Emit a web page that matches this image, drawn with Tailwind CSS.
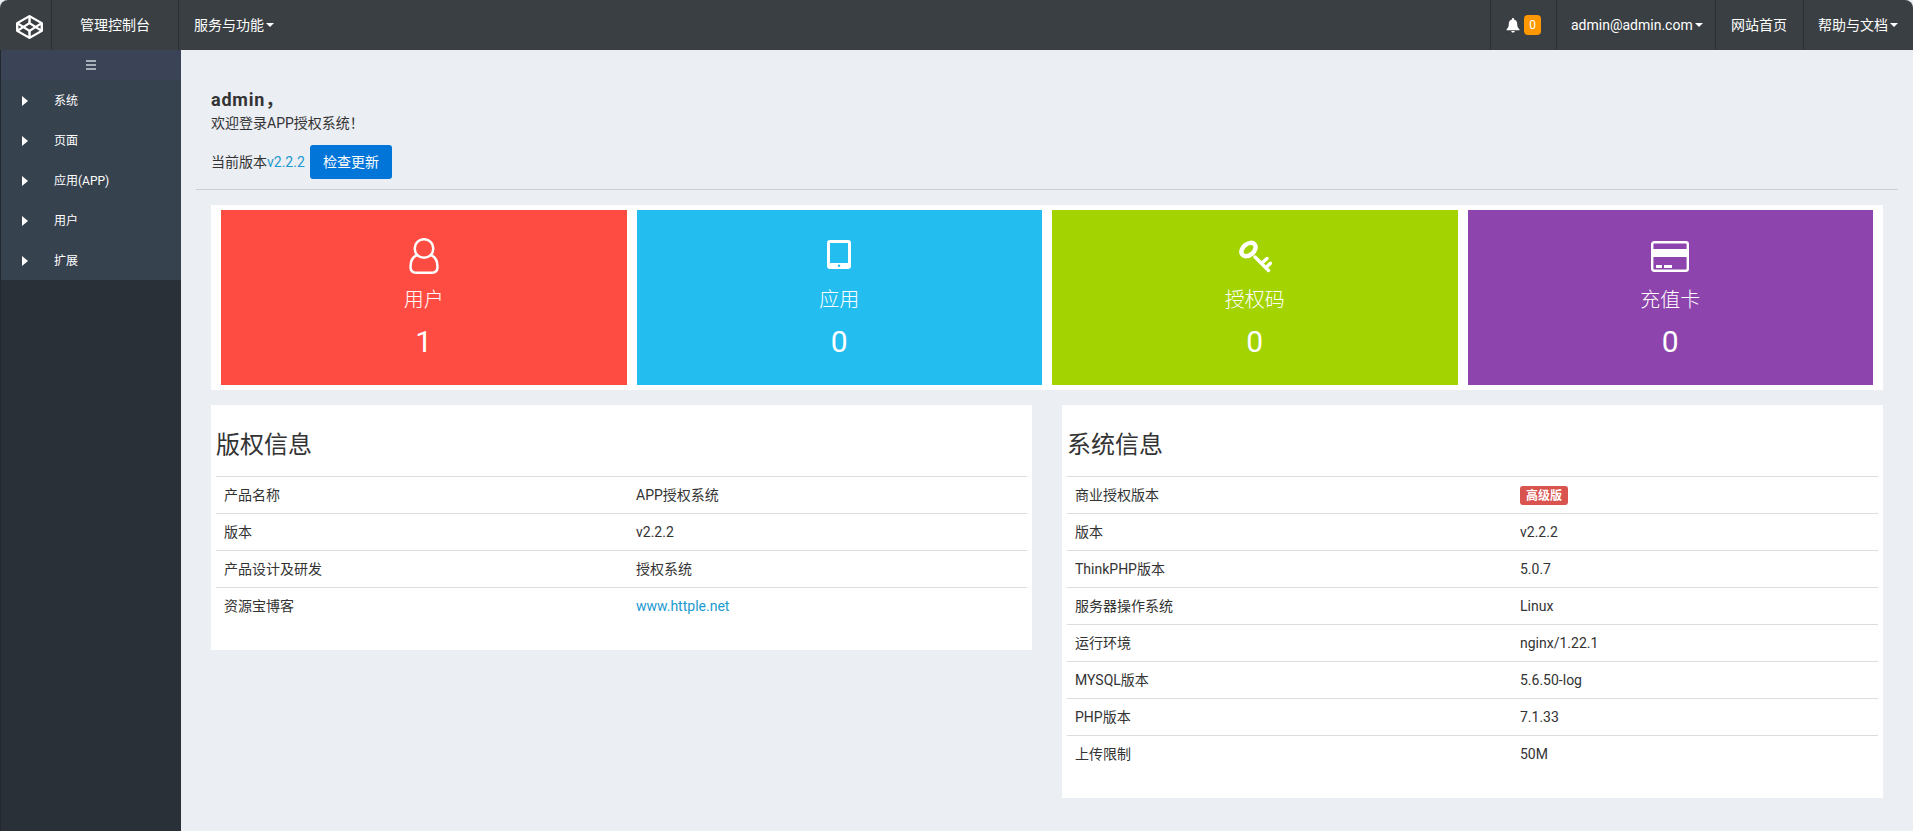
<!DOCTYPE html>
<html lang="zh-CN">
<head>
<meta charset="utf-8">
<title>管理控制台</title>
<script src="https://cdn.jsdelivr.net/npm/@tailwindcss/browser@4"></script>
</head>
<body class="bg-[#ebeef3] font-['Roboto','Noto_Sans_CJK_SC',sans-serif] text-sm text-[#333]">
<div class="flex h-screen flex-col overflow-hidden">

  <!-- top bar -->
  <header class="flex h-[50px] shrink-0 items-stretch rounded-t-lg bg-[#3a3f44] text-sm text-white">
    <div class="flex w-[52px] items-center justify-center border-r border-[#2b2f33] pt-[4px] pl-[8px]">
      <svg width="27" height="24" viewBox="1 1 22 22" preserveAspectRatio="none" fill="none" stroke="white" stroke-width="2" stroke-linejoin="round">
        <polygon points="12 2 22 8.5 22 15.5 12 22 2 15.5 2 8.5"/>
        <line x1="12" y1="22" x2="12" y2="15.5"/>
        <polyline points="22 8.5 12 15.5 2 8.5"/>
        <polyline points="2 15.5 12 8.5 22 15.5"/>
        <line x1="12" y1="2" x2="12" y2="8.5"/>
      </svg>
    </div>
    <div class="flex w-[127px] items-center justify-center border-r border-[#2b2f33]">管理控制台</div>
    <div class="flex items-center pl-[15px]">服务与功能<span class="ml-[2px] border-x-4 border-t-4 border-x-transparent border-t-white"></span></div>

    <div class="ml-auto flex items-stretch">
      <div class="flex w-[66px] items-center border-l border-[#2b2f33] pl-[15px]">
        <svg width="14" height="15" viewBox="0 0 14 15" fill="white"><path d="M7 0C7.6 0 8 .4 8 1v.6c2 .5 3.2 2.2 3.2 4.2 0 3 .8 4.2 2.3 5.7v.7H.5v-.7C2 10 2.8 8.8 2.8 5.8c0-2 1.2-3.7 3.2-4.2V1c0-.6.4-1 1-1zM5.3 13h3.4c0 1-.8 1.5-1.7 1.5S5.3 14 5.3 13z"/></svg>
        <span class="ml-[4px] flex h-[20px] w-[17px] items-center justify-center rounded-[4px] bg-[#ff9800] text-xs">0</span>
      </div>
      <div class="flex w-[159px] items-center border-l border-[#2b2f33] pl-[14px]">admin@admin.com<span class="ml-[2px] border-x-4 border-t-4 border-x-transparent border-t-white"></span></div>
      <div class="flex w-[88px] items-center border-l border-[#2b2f33] pl-[15px]">网站首页</div>
      <div class="flex w-[110px] items-center border-l border-[#2b2f33] pl-[14px]">帮助与文档<span class="ml-[2px] border-x-4 border-t-4 border-x-transparent border-t-white"></span></div>
    </div>
  </header>

  <div class="flex min-h-0 flex-1">
    <!-- sidebar -->
    <aside class="w-[181px] shrink-0 border-l border-[#23282e] bg-[#2a3038] text-xs text-white">
      <div class="flex h-[30px] flex-col items-center justify-center gap-[2px] bg-[#3a4456]">
        <span class="h-[2px] w-[10px] bg-[#a9afb8]"></span>
        <span class="h-[2px] w-[10px] bg-[#a9afb8]"></span>
        <span class="h-[2px] w-[10px] bg-[#a9afb8]"></span>
      </div>
      <nav class="bg-[#37424f]">
        <a class="flex h-10 items-center pt-[2px]"><span class="ml-[21px] border-y-[5px] border-l-[6px] border-y-transparent border-l-white"></span><span class="ml-[26px]">系统</span></a>
        <a class="flex h-10 items-center pt-[2px]"><span class="ml-[21px] border-y-[5px] border-l-[6px] border-y-transparent border-l-white"></span><span class="ml-[26px]">页面</span></a>
        <a class="flex h-10 items-center pt-[2px]"><span class="ml-[21px] border-y-[5px] border-l-[6px] border-y-transparent border-l-white"></span><span class="ml-[26px]">应用(APP)</span></a>
        <a class="flex h-10 items-center pt-[2px]"><span class="ml-[21px] border-y-[5px] border-l-[6px] border-y-transparent border-l-white"></span><span class="ml-[26px]">用户</span></a>
        <a class="flex h-10 items-center pt-[2px]"><span class="ml-[21px] border-y-[5px] border-l-[6px] border-y-transparent border-l-white"></span><span class="ml-[26px]">扩展</span></a>
      </nav>
    </aside>

    <!-- content -->
    <main class="min-w-0 flex-1 px-[15px]">
      <div class="px-[15px] pt-[38px]">
        <h4 class="h-[24px] text-lg leading-[24px] font-bold tracking-[0.8px]">admin，</h4>
        <p class="mt-px leading-5">欢迎登录APP授权系统！</p>
        <div class="mt-[12px] flex items-center">
          当前版本<a class="w-[43px] text-[#1b9ad0]">v2.2.2</a>
          <button class="h-[34px] w-[82px] rounded-[3px] bg-[#0275d8] text-white">检查更新</button>
        </div>
      </div>
      <hr class="mt-[10px] border-[#ccd0d4]">

      <!-- stat cards -->
      <div class="mx-[15px] mt-[15px] grid grid-cols-4 gap-[10px] bg-white px-[10px] py-[5px] text-white">
        <div class="flex h-[175px] flex-col items-center bg-[#ff4c42] pt-[28px]">
          <svg class="h-9" width="30" height="36" viewBox="0 0 30 36" fill="none" stroke="white" stroke-width="2.5"><circle cx="15" cy="10.5" r="9.3"/><path d="M8 17C3 19 1.5 24 1.5 29c0 4 1.5 5.7 5.5 5.7h16c4 0 5.5-1.7 5.5-5.7 0-5-1.5-10-6.5-12"/></svg>
          <div class="mt-[12px] text-xl leading-7 font-light">用户</div>
          <div class="mt-[10px] text-3xl leading-9">1</div>
        </div>
        <div class="flex h-[175px] flex-col items-center bg-[#23bdf0] pt-[28px]">
          <svg class="h-9" width="24" height="36" viewBox="0 0 24 36" fill="white" fill-rule="evenodd"><path d="M3 2h18a3 3 0 0 1 3 3v23a3 3 0 0 1-3 3H3a3 3 0 0 1-3-3V5a3 3 0 0 1 3-3zM3 5v20h18V5zM12 26.5a1.3 1.3 0 1 0 0 2.6 1.3 1.3 0 0 0 0-2.6z"/></svg>
          <div class="mt-[12px] text-xl leading-7 font-light">应用</div>
          <div class="mt-[10px] text-3xl leading-9">0</div>
        </div>
        <div class="flex h-[175px] flex-col items-center bg-[#a3d300] pt-[28px]">
          <svg class="h-9" width="34" height="36" viewBox="12 14 34 36" fill="none" stroke="white" stroke-linecap="round"><ellipse cx="22.5" cy="25.5" rx="8" ry="5.5" transform="rotate(-40 22.5 25.5)" stroke-width="4.5"/><path d="M29 33l13.5 13.5M36 39l5-4.5M40.5 43l4-3.8" stroke-width="3.4"/></svg>
          <div class="mt-[12px] text-xl leading-7 font-light">授权码</div>
          <div class="mt-[10px] text-3xl leading-9">0</div>
        </div>
        <div class="flex h-[175px] flex-col items-center bg-[#8e44ad] pt-[28px]">
          <svg class="h-9" width="38" height="36" viewBox="0 0 38 36" fill="white"><rect x="1.2" y="4.2" width="35.6" height="28.6" rx="2" fill="none" stroke="white" stroke-width="2.4"/><rect x="1" y="11" width="36" height="8"/><rect x="5" y="27" width="6" height="3"/><rect x="13" y="27" width="8" height="3"/></svg>
          <div class="mt-[12px] text-xl leading-7 font-light">充值卡</div>
          <div class="mt-[10px] text-3xl leading-9">0</div>
        </div>
      </div>

      <!-- info tables -->
      <div class="mx-[15px] mt-[15px] grid grid-cols-2 items-start gap-[30px]">
        <section class="bg-white px-[5px] pb-[25px]">
          <h3 class="flex h-[71px] items-end pb-[15px] text-2xl leading-8 font-normal">版权信息</h3>
          <table class="w-full table-fixed">
            <tbody>
              <tr class="h-[37px] border-t border-[#ddd]"><td class="w-[412px] px-2">产品名称</td><td class="px-2">APP授权系统</td></tr>
              <tr class="h-[37px] border-t border-[#ddd]"><td class="px-2">版本</td><td class="px-2">v2.2.2</td></tr>
              <tr class="h-[37px] border-t border-[#ddd]"><td class="px-2">产品设计及研发</td><td class="px-2">授权系统</td></tr>
              <tr class="h-[37px] border-t border-[#ddd]"><td class="px-2">资源宝博客</td><td class="px-2"><a class="text-[#1b9ad0]">www.httple.net</a></td></tr>
            </tbody>
          </table>
        </section>
        <section class="bg-white px-[5px] pb-[25px]">
          <h3 class="flex h-[71px] items-end pb-[15px] text-2xl leading-8 font-normal">系统信息</h3>
          <table class="w-full table-fixed">
            <tbody>
              <tr class="h-[37px] border-t border-[#ddd]"><td class="w-[445px] px-2">商业授权版本</td><td class="px-2"><span class="inline-flex h-[19px] w-[48px] items-center justify-center rounded-[3px] bg-[#d9534f] align-middle text-xs font-bold text-white">高级版</span></td></tr>
              <tr class="h-[37px] border-t border-[#ddd]"><td class="px-2">版本</td><td class="px-2">v2.2.2</td></tr>
              <tr class="h-[37px] border-t border-[#ddd]"><td class="px-2">ThinkPHP版本</td><td class="px-2">5.0.7</td></tr>
              <tr class="h-[37px] border-t border-[#ddd]"><td class="px-2">服务器操作系统</td><td class="px-2">Linux</td></tr>
              <tr class="h-[37px] border-t border-[#ddd]"><td class="px-2">运行环境</td><td class="px-2">nginx/1.22.1</td></tr>
              <tr class="h-[37px] border-t border-[#ddd]"><td class="px-2">MYSQL版本</td><td class="px-2">5.6.50-log</td></tr>
              <tr class="h-[37px] border-t border-[#ddd]"><td class="px-2">PHP版本</td><td class="px-2">7.1.33</td></tr>
              <tr class="h-[37px] border-t border-[#ddd]"><td class="px-2">上传限制</td><td class="px-2">50M</td></tr>
            </tbody>
          </table>
        </section>
      </div>
    </main>
  </div>
</div>
</body>
</html>
